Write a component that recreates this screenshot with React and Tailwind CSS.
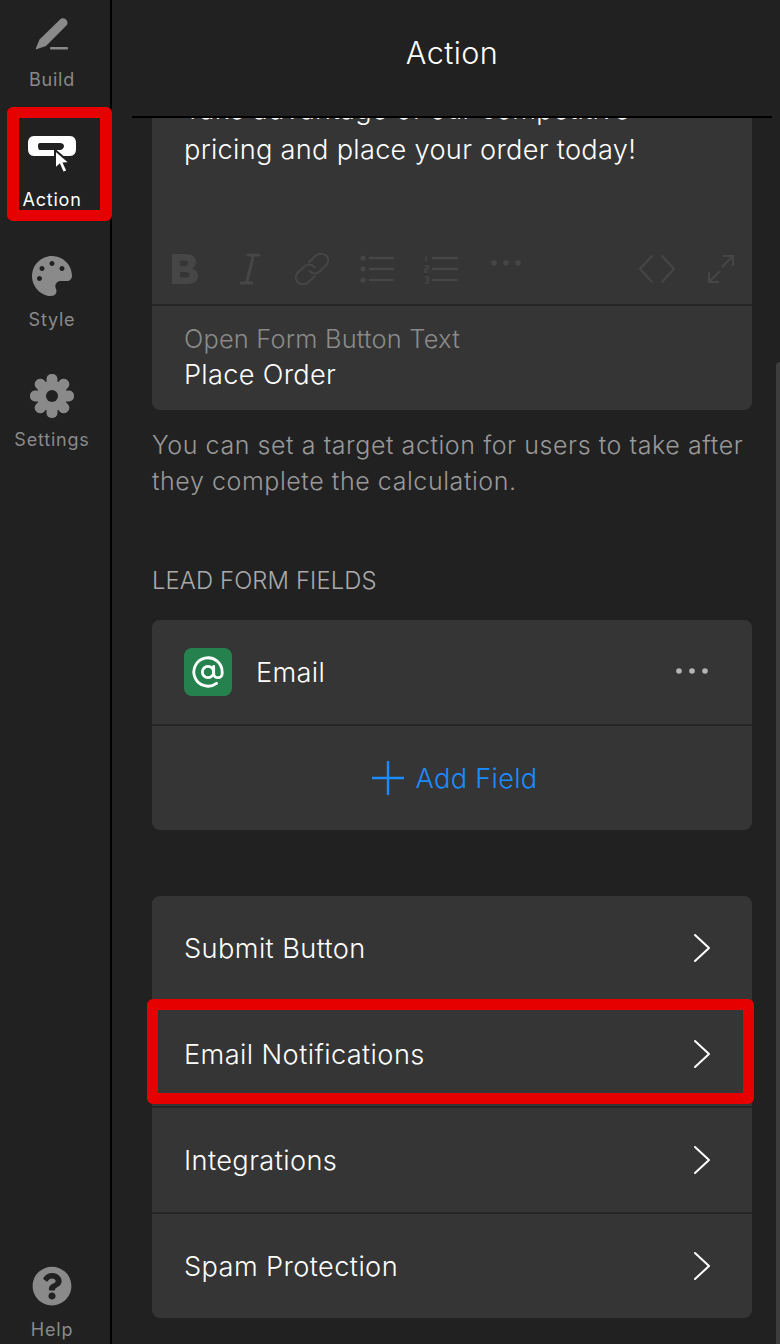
import React from "react";
import { FaPalette, FaQuestionCircle } from "react-icons/fa";
import { AtSign } from "lucide-react";

const font = { fontFamily: '"Inter", "Liberation Sans", sans-serif' };

function NavItem({ label, active, icon, className = "h-[120px]" }) {
  return (
    <div className={`flex flex-col items-center pt-4 ${className}`}>
      <div className="flex h-10 w-full items-center justify-center">{icon}</div>
      <div className={`mt-3 text-[18px] leading-6 tracking-[0.8px] ${active ? "text-white" : "text-[#8a8a8a]"}`}>{label}</div>
    </div>
  );
}

const Pencil = () => (
  <svg width="44" height="40" viewBox="0 0 44 40" fill="#8a8a8a" className="ml-[2px]">
    <path d="M29 3.5 C30.5 2 33 1.8 35 3.5 C37 5.3 37 8 35.4 9.6 L15 30 L5.5 33.2 C5 33.3 4.6 33 4.8 32.4 L8.5 23.5 Z" />
    <rect x="19" y="31" width="18" height="2.4" rx="1" />
  </svg>
);

const ActionIcon = () => (
  <svg width="60" height="44" viewBox="0 0 60 44" className="mt-1">
    <path fillRule="evenodd" fill="#fff" d="M12 0 H48 C52 0 54 3 54 7 V13 C54 17 52 20 48 20 H12 C8 20 6 17 6 13 V7 C6 3 8 0 12 0 Z M18 7 C16.500 7 16 8 16 10 C16 12 16.500 14 18 14 H38 C40 14 42 12 42 10 C42 8 40 7 38 7 Z" />
    <path fill="#fff" stroke="#212121" strokeWidth="2" strokeLinejoin="miter" d="M33 14 L33 33 L37.500 29 L41 37 L45.500 35 L42 27.500 L48 27 Z" />
  </svg>
);

const Gear = () => (
  <svg width="44" height="44" viewBox="0 0 44 44">
    {[0, 45, 90, 135, 180, 225, 270, 315].map((a) => (
      <rect key={a} x="16.5" y="0" width="11" height="14" rx="5" fill="#8a8a8a" transform={`rotate(${a} 22 22)`} />
    ))}
    <circle cx="22" cy="22" r="15" fill="#8a8a8a" />
    <circle cx="22" cy="22" r="6" fill="#212121" />
  </svg>
);

const Chevron = () => (
  <svg width="20" height="30" viewBox="0 0 20 30" fill="none" stroke="#fff" strokeWidth="2" strokeLinecap="round" strokeLinejoin="round">
    <path d="M3 2 L17 15 L3 28" />
  </svg>
);

function Row({ label, children }) {
  return (
    <div className="flex h-[104px] items-center justify-between bg-[#353535] pl-8 pr-10">
      <span className="pt-[3px] text-[27.2px] font-light tracking-[0.4px] text-white">{label}</span>
      {children}
    </div>
  );
}

const Toolbar = () => {
  const c = "#464646";
  return (
    <div className="flex h-[40px] items-center pl-[18px] pr-[16px]">
      <svg width="30" height="34" viewBox="0 0 30 34" fill={c} fillRule="evenodd">
        <path d="M2 2 H16 C22 2 26 5 26 10 C26 13 24.5 15.5 22 16.5 C25.500 17.500 28 20 28 24 C28 29 24 32 18 32 H2 Z M10 8.500 V14 H15 C17 14 18 13 18 11.200 C18 9.500 17 8.500 15 8.500 Z M10 20 V25.500 H16 C18.500 25.500 19.500 24.500 19.500 22.700 C19.500 21 18.500 20 16 20 Z" />
      </svg>
      <svg className="ml-[38px]" width="24" height="34" viewBox="0 0 24 34" fill="none" stroke={c} strokeWidth="3" strokeLinecap="round">
        <path d="M10 3 H21 M3 31 H14 M15.500 3 L8.500 31" />
      </svg>
      <svg className="ml-[31px]" width="38" height="38" viewBox="0 0 38 38" fill="none" stroke={c} strokeWidth="2" strokeLinecap="round">
        <path d="M16 12 L23 5.500 C26 3 31 3 33.500 6 C36 9 35.500 13 33 15.500 L26 22 C23 24.500 19 24 16.500 21" />
        <path d="M22 26 L15 32.500 C12 35 7 35 4.500 32 C2 29 2.500 25 5 22.500 L12 16 C15 13.500 19 14 21.500 17" />
      </svg>
      <svg className="ml-[29px]" width="34" height="30" viewBox="0 0 34 30" fill="none" stroke={c} strokeWidth="2.4">
        <path d="M9 4 H34 M9 15 H34 M9 26 H34" />
        <g fill={c} stroke="none"><circle cx="3" cy="4" r="2.600" /><circle cx="3" cy="15" r="2.600" /><circle cx="3" cy="26" r="2.600" /></g>
      </svg>
      <svg className="ml-[30px]" width="34" height="30" viewBox="0 0 34 30" fill="none" stroke={c} strokeWidth="2.4">
        <path d="M8 4 H34 M8 15 H34 M8 26 H34" />
        <g stroke={c} strokeWidth="1.500"><path d="M2 2 V7 M1 12 H4 V15 H1 V18 H4 M1 23 H4 V29 H1 M2 26 H4" /></g>
      </svg>
      <svg className="ml-[32px] -mt-[12px]" width="32" height="8" viewBox="0 0 32 8" fill={c}>
        <circle cx="4" cy="4" r="2.800" /><circle cx="16" cy="4" r="2.800" /><circle cx="28" cy="4" r="2.800" />
      </svg>
      <svg className="ml-auto" width="38" height="30" viewBox="0 0 38 30" fill="none" stroke={c} strokeWidth="2" strokeLinecap="round" strokeLinejoin="round">
        <path d="M14 2 L2 15 L14 28 M24 2 L36 15 L24 28" />
      </svg>
      <svg className="ml-[30px]" width="30" height="32" viewBox="0 0 30 32" fill="none" stroke={c} strokeWidth="2">
        <path d="M17 3 H27 V13 M27 3 L16 14 M3 19 V29 H13 M3 29 L14 18" />
      </svg>
    </div>
  );
};

export default function App() {
  return (
    <div className="relative flex h-[1344px] w-[780px] overflow-hidden bg-[#212121]" style={font}>
      <aside className="flex h-full w-[112px] shrink-0 flex-col border-r-2 border-black pr-[6px]">
        <NavItem label="Build" icon={<Pencil />} />
        <NavItem label="Action" active icon={<ActionIcon />} />
        <NavItem label="Style" icon={<FaPalette size={40} color="#8a8a8a" />} />
        <NavItem label="Settings" icon={<Gear />} />
        <NavItem className="mt-auto h-[94px]" label="Help" icon={<FaQuestionCircle size={40} color="#8a8a8a" />} />
      </aside>

      <main className="flex min-w-0 flex-1 flex-col">
        <header className="ml-5 mr-2 flex h-[118px] shrink-0 items-center justify-center border-b-2 border-black pb-[10px] text-[30.6px] font-light tracking-[0.4px] text-white">
          Action
        </header>

        <div className="ml-10 flex w-[600px] flex-col">
          <section className="overflow-hidden rounded-b-lg bg-[#252525]">
            <div className="h-[186px] overflow-hidden bg-[#353535]">
              <div className="-mt-[28px] px-8 text-[27.2px] font-light leading-[40px] tracking-[0.28px] text-white">
                <p>Take advantage of our competitive</p>
                <p>pricing and place your order today!</p>
              </div>
              <div className="mt-[79px]"><Toolbar /></div>
            </div>
            <div className="mt-[2px] flex h-[104px] flex-col justify-center bg-[#353535] px-8 pb-[3px]">
              <div className="text-[25.4px] font-light leading-9 tracking-[0.2px] text-[#8a8a8a]">Open Form Button Text</div>
              <div className="text-[27.2px] font-light leading-9 tracking-[0.3px] text-white">Place Order</div>
            </div>
          </section>

          <p className="mt-[17px] text-[25px] font-light leading-9 tracking-[0.57px] text-[#999]">
            You can set a target action for users to take after they complete the calculation.
          </p>

          <h2 className="mt-[66px] text-[23.8px] font-light leading-8 tracking-[0.12px] text-[#aaa]">LEAD FORM FIELDS</h2>

          <section className="mt-[23px] flex flex-col gap-[2px] overflow-hidden rounded-lg bg-[#252525]">
            <div className="flex h-[104px] items-center bg-[#353535] pl-8 pr-11">
              <div className="flex h-12 w-12 items-center justify-center rounded-lg bg-[#25824f]">
                <AtSign size={34} color="#fff" strokeWidth={2} />
              </div>
              <span className="ml-[24px] pt-[3px] text-[27.2px] font-light tracking-[0.3px] text-white">Email</span>
              <svg className="ml-auto -mt-[2px]" width="32" height="8" viewBox="0 0 32 8" fill="#b4b4b4">
                <circle cx="3" cy="4" r="2.800" /><circle cx="16" cy="4" r="2.800" /><circle cx="29" cy="4" r="2.800" />
              </svg>
            </div>
            <div className="flex h-[104px] items-center justify-center gap-3 bg-[#353535] pl-[5px] text-[27.2px] font-light tracking-[0.28px] text-[#1a8cff]">
              <svg width="32" height="34" viewBox="0 0 32 34" stroke="#1a8cff" strokeWidth="2.400">
                <path d="M16 0 V34 M0 17 H32" />
              </svg>
              <span className="pt-[3px]">Add Field</span>
            </div>
          </section>

          <section className="mt-[66px] flex flex-col gap-[2px] overflow-hidden rounded-lg bg-[#252525]">
            <Row label="Submit Button"><Chevron /></Row>
            <Row label="Email Notifications"><Chevron /></Row>
            <Row label="Integrations"><Chevron /></Row>
            <Row label="Spam Protection"><Chevron /></Row>
          </section>
        </div>
      </main>

      <div className="absolute left-[776px] top-[362px] h-[982px] w-1 rounded-tl-md bg-[#3d3d3d]" />
      <div className="absolute left-[7px] top-[107px] h-[114px] w-[105px] rounded-md border-x-[12px] border-y-[11px] border-[#e60000]" />
      <div className="absolute left-[147px] top-[999px] h-[105px] w-[607px] rounded-md border-[11px] border-[#e60000]" />
    </div>
  );
}
